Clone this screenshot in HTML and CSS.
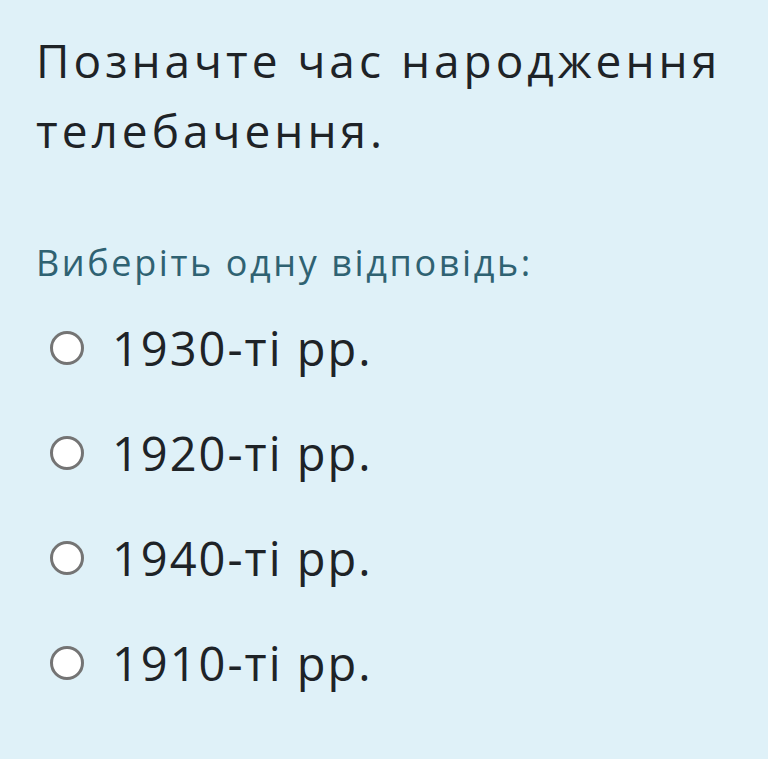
FILE: index.html
```html
<!DOCTYPE html>
<html lang="uk">
<head>
<meta charset="utf-8">
<link rel="stylesheet" href="styles.css">
</head>
<body>
<main class="question">
  <h1 class="qtext">Позначте час народження телебачення.</h1>
  <p class="prompt">Виберіть одну відповідь:</p>
  <ul class="answers">
    <li class="answer"><span class="radio"></span><span class="label">1930-ті рр.</span></li>
    <li class="answer"><span class="radio"></span><span class="label">1920-ті рр.</span></li>
    <li class="answer"><span class="radio"></span><span class="label">1940-ті рр.</span></li>
    <li class="answer"><span class="radio"></span><span class="label">1910-ті рр.</span></li>
  </ul>
</main>
</body>
</html>
```
FILE: styles.css
```css
html, body {
  margin: 0;
  padding: 0;
  background: #dff1f8;
}
body {
  width: 768px;
  height: 759px;
  overflow: hidden;
  font-family: "Open Sans", "Noto Sans", sans-serif;
  color: #1e2327;
}
.question {
  padding: 25px 37px 0 36px;
}
.qtext {
  margin: 0;
  font-size: 46px;
  font-weight: 400;
  line-height: 70px;
  letter-spacing: 4px;
}
.prompt {
  margin: 76px 0 0 0;
  font-size: 36px;
  line-height: 44px;
  color: #2f6272;
  letter-spacing: 2.6px;
}
.answers {
  list-style: none;
  margin: 10px 0 0 0;
  padding: 0;
}
.answer {
  display: flex;
  align-items: center;
  height: 105px;
}
.radio {
  box-sizing: border-box;
  width: 34px;
  height: 34px;
  margin-left: 14px;
  border-radius: 50%;
  border: 3px solid #747474;
  background: #ffffff;
  flex: none;
}
.label {
  margin-left: 28px;
  font-size: 47px;
  letter-spacing: 2px;
}
```
